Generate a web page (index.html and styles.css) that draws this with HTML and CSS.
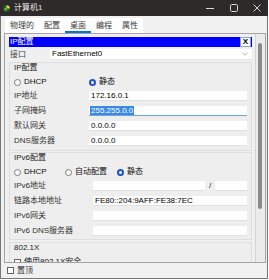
FILE: index.html
```html
<!DOCTYPE html>
<html lang="zh">
  <head>
    <meta charset="UTF-8" />
    <title>计算机1</title>
    <link rel="stylesheet" href="styles.css">
  </head>
  <body>
    <div class="window">
      <div class="titlebar">
        <svg class="app-icon" width="7" height="7" viewBox="0 0 7 7">
          <circle cx="3.5" cy="3.5" r="3.3" fill="#1f5f2a" />
          <path d="M3.5 0.2 A3.3 3.3 0 0 1 6.8 3.5 L3.5 3.5 Z" fill="#e8d23a" />
          <circle cx="2.6" cy="4.3" r="1.3" fill="#5cc23c" />
        </svg>
        <span class="title">计算机1</span>
        <div class="controls">
          <span class="ctl">
            <svg width="10" height="10" viewBox="0 0 10 10"><path d="M1 5.5h8" stroke="#d8d8d8" stroke-width="1" /></svg>
          </span>
          <span class="ctl">
            <svg width="10" height="10" viewBox="0 0 10 10"><rect x="1.5" y="1.5" width="7" height="7" rx="1.2" fill="none" stroke="#d8d8d8" stroke-width="1" /></svg>
          </span>
          <span class="ctl ctl-close">
            <svg width="10" height="10" viewBox="0 0 10 10"><path d="M1.5 1.5l7 7M8.5 1.5l-7 7" stroke="#d8d8d8" stroke-width="1" /></svg>
          </span>
        </div>
      </div>

      <div class="client">
        <div class="tabs">
          <span class="tab">物理的</span>
          <span class="tab">配置</span>
          <span class="tab active">桌面</span>
          <span class="tab">编程</span>
          <span class="tab">属性</span>
        </div>

        <div class="panel">
          <div class="scroll">
            <div class="hdr">
              <span>IP配置</span>
              <span class="close-x">X</span>
            </div>

            <div class="if-row">
              <span class="if-label">接口</span>
              <div class="select">
                <span>FastEthernet0</span>
                <svg width="6" height="4" viewBox="0 0 6 4"><path d="M0.5 0.8l2.5 2.4 2.5-2.4" fill="none" stroke="#9a9a9a" stroke-width="0.8" /></svg>
              </div>
            </div>

            <div class="group">
              <div class="group-title">IP配置</div>
              <div class="radios">
                <span class="opt opt-wide"><i class="radio"></i>DHCP</span>
                <span class="opt"><i class="radio on"></i>静态</span>
              </div>
              <div class="rows">
                <div class="frow"><span class="lbl">IP地址</span><span class="field">172.16.0.1</span></div>
                <div class="frow"><span class="lbl">子网掩码</span><span class="field focus"><span class="sel">255.255.0.0</span></span></div>
                <div class="frow"><span class="lbl">默认网关</span><span class="field">0.0.0.0</span></div>
                <div class="frow"><span class="lbl">DNS服务器</span><span class="field">0.0.0.0</span></div>
              </div>
            </div>

            <div class="group group-v6">
              <div class="group-title">IPv6配置</div>
              <div class="radios">
                <span class="opt opt-v6"><i class="radio"></i>DHCP</span>
                <span class="opt opt-v6b"><i class="radio"></i>自动配置</span>
                <span class="opt"><i class="radio on"></i>静态</span>
              </div>
              <div class="rows">
                <div class="frow">
                  <span class="lbl">IPv6地址</span>
                  <span class="field"></span>
                  <span class="slash">/</span>
                  <span class="field prefix"></span>
                </div>
                <div class="frow"><span class="lbl">链路本地地址</span><span class="field">FE80::204:9AFF:FE38:7EC</span></div>
                <div class="frow"><span class="lbl">IPv6网关</span><span class="field"></span></div>
                <div class="frow"><span class="lbl">IPv6 DNS服务器</span><span class="field"></span></div>
              </div>
            </div>

            <div class="group group-dot1x">
              <div class="group-title">802.1X</div>
              <div class="check-row"><i class="box"></i>使用802.1X安全</div>
            </div>
          </div>
          <div class="vbar"><div class="thumb"></div></div>
        </div>

        <div class="ontop"><i class="box"></i>置顶</div>
      </div>
    </div>
  </body>
</html>
```

FILE: styles.css
```css
body {
  margin: 0;
  background: #fff;
  font-family: "Liberation Sans", "Noto Sans CJK SC", sans-serif;
  font-size: 8px;
  line-height: 10px;
  color: #1e1e1e;
}
.window {
  width: 268px;
  height: 279px;
  box-sizing: border-box;
  border: 1px solid #767676;
  border-top: 0;
  display: flex;
  flex-direction: column;
  background: #f0f0f0;
}
.titlebar {
  height: 16px;
  flex: none;
  margin: 0 -1px;
  padding-left: 3px;
  display: flex;
  align-items: center;
  background: #2f2a2a;
  color: #e6e6e6;
}
.app-icon {
  flex: none;
}
.title {
  margin-left: 4px;
}
.controls {
  margin-left: auto;
  display: flex;
}
.ctl {
  width: 24px;
  height: 16px;
  display: flex;
  align-items: center;
  justify-content: center;
}
.ctl-close {
  width: 22px;
}
.client {
  flex: 1;
  display: flex;
  flex-direction: column;
  padding: 2px 1px 0 3px;
}
.tabs {
  align-self: flex-start;
  display: flex;
  height: 15px;
  margin-left: 1px;
  background: #fff;
}
.tab {
  padding: 0 5px;
  display: flex;
  align-items: center;
  color: #3a3a3a;
}
.tab.active {
  box-shadow: inset 0 -2px 0 #0078d4;
}
.panel {
  flex: none;
  height: 230px;
  box-sizing: border-box;
  border: 1px solid #a3a3a3;
  display: flex;
}
.scroll {
  flex: 1;
  overflow: hidden;
  padding: 3px 3px 0 4px;
}
.vbar {
  width: 9px;
  background: #ebebeb;
  border-left: 1px solid #d4d4d4;
}
.thumb {
  width: 4px;
  height: 166px;
  margin: 9px 0 0 2px;
  background: #8a8a8a;
  border-radius: 2px;
}
.hdr {
  height: 10px;
  padding-left: 1px;
  display: flex;
  align-items: center;
  justify-content: space-between;
  background: #0000ff;
  color: #fff;
}
.close-x {
  width: 9px;
  height: 8px;
  margin-right: 1px;
  border: 1px solid #8aa0d8;
  background: #fff;
  color: #000;
  font-weight: bold;
  font-size: 8px;
  line-height: 8px;
  text-align: center;
}
.if-row {
  height: 11px;
  margin-top: 2px;
  display: flex;
  align-items: center;
}
.if-label {
  width: 41px;
  padding-left: 1px;
  box-sizing: border-box;
  color: #444;
}
.select {
  flex: 1;
  height: 11px;
  box-sizing: border-box;
  padding: 0 4px 0 2px;
  display: flex;
  align-items: center;
  justify-content: space-between;
  background: #fff;
  border-bottom: 1px solid #e4e4e4;
  color: #000;
}
.group {
  margin-top: 2px;
  padding: 0 4px 4px 4px;
  border: 1px solid #dedede;
  background: #eeeeee;
}
.group-v6 {
  margin-top: 1px;
  padding-bottom: 3px;
}
.group-title {
  height: 10px;
  margin-bottom: 4px;
  color: #222;
}
.radios {
  height: 10px;
  display: flex;
  align-items: center;
}
.opt {
  display: flex;
  align-items: center;
  color: #111;
}
.opt-wide {
  width: 75px;
}
.opt-v6 {
  width: 51px;
}
.opt-v6b {
  width: 52px;
}
.radio {
  width: 5px;
  height: 5px;
  margin-right: 3px;
  border: 1px solid #7a7a7a;
  border-radius: 50%;
  background: #fff;
}
.radio.on {
  width: 3px;
  height: 3px;
  border: 2px solid #1d4fc4;
}
.rows {
  margin-top: 4px;
  display: flex;
  flex-direction: column;
  gap: 5px;
}
.frow {
  height: 10px;
  display: flex;
  align-items: center;
}
.lbl {
  width: 75px;
  flex: none;
  color: #333;
}
.group-v6 .lbl {
  width: 79px;
}
.field {
  flex: 1;
  height: 10px;
  box-sizing: border-box;
  padding-left: 2px;
  background: #fff;
  border-bottom: 1px solid #e0e0e0;
  color: #000;
  line-height: 9px;
}
.field.focus {
  padding-left: 1px;
  border-bottom-color: #6aa5dc;
}
.sel {
  display: inline-block;
  padding: 0 1px;
  background: #3a8ae3;
  color: #fff;
}
.slash {
  width: 10px;
  text-align: center;
}
.field.prefix {
  flex: none;
  width: 32px;
}
.group-dot1x {
  margin-top: 2px;
}
.check-row {
  height: 10px;
  display: flex;
  align-items: center;
  color: #111;
}
.box {
  width: 5px;
  height: 5px;
  margin-right: 3px;
  border: 1px solid #666;
  background: #fff;
}
.ontop {
  flex: 1;
  padding-left: 3px;
  display: flex;
  align-items: center;
  color: #333;
}
```
